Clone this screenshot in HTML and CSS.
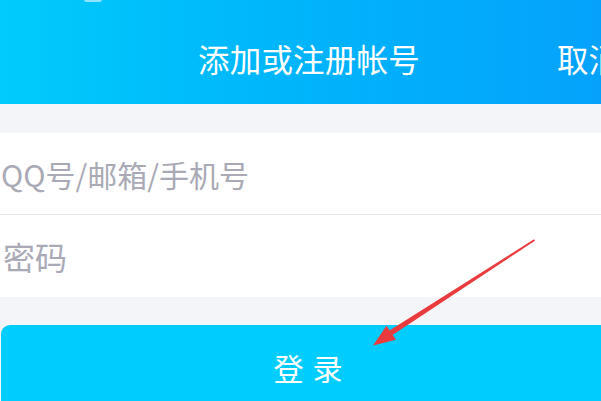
FILE: index.html
```html
<!DOCTYPE html>
<html lang="zh-CN">
<head>
<meta charset="utf-8">
<title>添加或注册帐号</title>
<link rel="stylesheet" href="styles.css">
</head>
<body>
<div class="screen">
  <header class="topbar">
    <span class="notch"></span>
    <h1 class="title">添加或注册帐号</h1>
    <span class="cancel">取消</span>
  </header>
  <section class="form">
    <div class="field field-account">QQ号/邮箱/手机号</div>
    <div class="field field-password">密码</div>
  </section>
  <div class="actions">
    <button class="login">登录</button>
  </div>
  <svg class="arrow" width="601" height="401" viewBox="0 0 601 401">
    <polygon points="534,239.3 535,240.7 392.5,335 389.5,330.6" fill="#e93b3d"/>
    <polygon points="373,345.5 386.5,325.8 396,339.8" fill="#e93b3d"/>
  </svg>
</div>
</body>
</html>
```
FILE: styles.css
```css
html, body {
  margin: 0;
  padding: 0;
}
body {
  width: 601px;
  height: 401px;
  overflow: hidden;
  background: #f4f5f9;
  font-family: "Noto Sans CJK SC", "Noto Sans", sans-serif;
}
.screen {
  position: relative;
  width: 601px;
  height: 401px;
  overflow: hidden;
}
.topbar {
  position: relative;
  height: 104px;
  box-sizing: border-box;
  padding: 12px 0 0 198px;
  display: flex;
  align-items: center;
  background: linear-gradient(90deg, #00cbfa 0%, #00b6fb 45%, #05a2fb 100%);
  color: #ffffff;
  white-space: nowrap;
}
.notch {
  position: absolute;
  left: 84px;
  top: -3px;
  width: 18px;
  height: 5px;
  border-radius: 3px;
  background: rgba(255, 255, 255, 0.55);
}
.title {
  margin: 0;
  font-size: 31.5px;
  font-weight: 400;
  line-height: 40px;
  letter-spacing: 0.2px;
}
.cancel {
  margin-left: 137px;
  font-size: 31.5px;
  line-height: 40px;
}
.form {
  margin-top: 29px;
  background: #ffffff;
}
.field {
  height: 81px;
  display: flex;
  align-items: center;
  padding: 0 0 0 1px;
  box-sizing: border-box;
  color: #a9aab5;
  white-space: nowrap;
}
.field-account {
  font-size: 30px;
}
.field-password {
  border-top: 1px solid #e6e7ea;
  height: 83px;
  font-size: 32px;
  padding-left: 3px;
}
.actions {
  margin-top: 28px;
  padding-left: 1px;
}
.login {
  display: block;
  width: 614px;
  height: 84px;
  border: 0;
  border-radius: 9px;
  background: #00cdfe;
  color: #ffffff;
  font-family: "Noto Sans CJK SC", "Noto Sans", sans-serif;
  font-size: 30px;
  letter-spacing: 9px;
  text-indent: 9px;
  padding: 0;
}
.arrow {
  position: absolute;
  left: 0;
  top: 0;
}
```
